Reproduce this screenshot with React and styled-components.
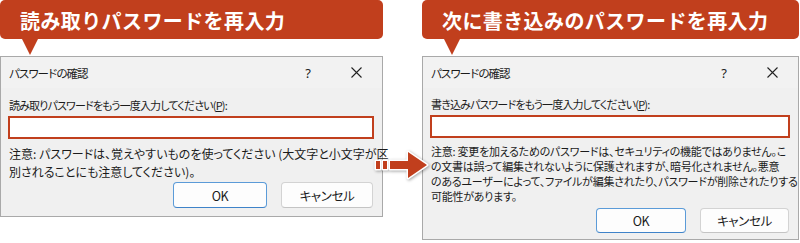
import React from 'react';
import styled, { createGlobalStyle } from 'styled-components';

const Global = createGlobalStyle`
  html, body { margin: 0; padding: 0; background: #fff; }
  body {
    width: 800px; height: 243px; overflow: hidden;
    font-family: "Noto Sans CJK JP", "Noto Sans", sans-serif;
  }
`;

const RED = '#c13f1d';

const Page = styled.div`
  position: relative;
  display: flex;
  align-items: flex-start;
  gap: 39px;
  width: 800px;
  height: 243px;
`;

const Column = styled.div`
  display: flex;
  flex-direction: column;
  flex: none;
  width: ${(p) => p.$w}px;
`;

const Banner = styled.div`
  height: 39px;
  box-sizing: border-box;
  background: ${RED};
  border-radius: 5px;
  color: #fff;
  font-weight: 700;
  font-size: 20px;
  letter-spacing: 0.4px;
  display: flex;
  align-items: center;
  padding: 2px 0 0 20px;
  white-space: nowrap;
`;

const Pointer = styled.div`
  width: 0;
  height: 0;
  margin-left: ${(p) => p.$x - 8}px;
  border-left: 8px solid transparent;
  border-right: 8px solid transparent;
  border-top: 16px solid ${RED};
  margin-bottom: 1px;
`;

const Dialog = styled.div`
  border: 1px solid #a9a9a9;
  background: #f0f0f0;
  color: #1b1b1b;
  font-size: 12px;
  padding-bottom: ${(p) => p.$padB}px;
`;

const TitleBar = styled.div`
  height: 31px;
  display: flex;
  align-items: center;
  padding-left: 8px;
  background: #f2f2f2;
`;

const Title = styled.div`
  flex: 1;
  font-size: 11.5px;
  letter-spacing: -0.9px;
  font-feature-settings: "palt";
  color: #1b1b1b;
`;

const TitleButton = styled.div`
  width: 48px;
  height: 31px;
  display: flex;
  align-items: center;
  justify-content: center;
  font-size: 13px;
  color: #222;
  font-family: "Noto Sans", sans-serif;
  &:last-child { margin-right: 2px; }
`;

const Body = styled.div`
  padding: ${(p) => p.$padT}px 8px 0 7px;
  display: flex;
  flex-direction: column;
`;

const Label = styled.div`
  line-height: 16px;
  padding-left: 1px;
  font-size: 11px;
  letter-spacing: -0.85px;
  white-space: nowrap;
  font-feature-settings: "palt";
`;

const Input = styled.div`
  margin-top: 3px;
  height: 23px;
  box-sizing: border-box;
  border: 2px solid ${RED};
  background: #fff;
`;

const Note = styled.div`
  margin-top: 6px;
  padding-left: 1px;
  font-size: ${(p) => p.$fs}px;
  letter-spacing: ${(p) => p.$ls}px;
  line-height: ${(p) => p.$lh}px;
  font-feature-settings: "palt";
`;

const Line = styled.div`
  white-space: nowrap;
`;

const Buttons = styled.div`
  margin-top: ${(p) => p.$mt}px;
  display: flex;
  justify-content: flex-end;
  gap: 14px;
  padding-right: 1px;
`;

const Button = styled.div`
  width: ${(p) => p.$w}px;
  height: ${(p) => p.$h}px;
  box-sizing: border-box;
  border-radius: 4px;
  border: 1px solid ${(p) => (p.$primary ? '#5b9bd8' : '#d3d3d3')};
  border-bottom-color: ${(p) => (p.$primary ? '#3f83c9' : '#c4c4c4')};
  background: #fdfdfd;
  display: flex;
  align-items: center;
  justify-content: center;
  font-size: 12.5px;
  letter-spacing: -0.4px;
  font-feature-settings: "palt";
  color: #1b1b1b;
`;

const ArrowSvg = styled.svg`
  position: absolute;
  left: 369px;
  top: 145px;
  filter: drop-shadow(1px 1.5px 1.5px rgba(0, 0, 0, 0.35));
`;

const CloseIcon = () => (
  <svg width="11" height="11" viewBox="0 0 11 11">
    <path d="M0.5 0.5 L10.5 10.5 M10.5 0.5 L0.5 10.5" stroke="#222" strokeWidth="1.1" fill="none" />
  </svg>
);

const PasswordDialog = ({ label, lines, fs, ls, lh, padT, btnMt, padB, okW, cancelW, btnH }) => (
  <Dialog $padB={padB}>
    <TitleBar>
      <Title>パスワードの確認</Title>
      <TitleButton>?</TitleButton>
      <TitleButton><CloseIcon /></TitleButton>
    </TitleBar>
    <Body $padT={padT}>
      <Label>{label}(<u>P</u>):</Label>
      <Input />
      <Note $fs={fs} $ls={ls} $lh={lh}>
        {lines.map((l) => (
          <Line key={l}>{l}</Line>
        ))}
      </Note>
      <Buttons $mt={btnMt}>
        <Button $primary $w={okW} $h={btnH}>OK</Button>
        <Button $w={cancelW} $h={btnH}>キャンセル</Button>
      </Buttons>
    </Body>
  </Dialog>
);

const Arrow = () => (
  <ArrowSvg width="64" height="40" viewBox="0 0 64 40">
    <g stroke="#fff" strokeWidth="3" strokeLinejoin="round" paintOrder="stroke" fill={RED}>
      <rect x="7" y="16" width="4" height="8" />
      <rect x="14" y="16" width="4" height="8" />
      <path d="M21 16 H39 V7 L58 20 L39 33 V24 H21 Z" />
    </g>
  </ArrowSvg>
);

export default function App() {
  return (
    <>
      <Global />
      <Page>
        <Column $w={383}>
          <Banner>読み取りパスワードを再入力</Banner>
          <Pointer $x={30} />
          <PasswordDialog
            label="読み取りパスワードをもう一度入力してください"
            lines={[
              '注意: パスワードは、覚えやすいものを使ってください (大文字と小文字が区',
              '別されることにも注意してください)。',
            ]}
            fs={12}
            ls={0}
            lh={18}
            padT={9}
            btnMt={1}
            padB={8}
            okW={94}
            cancelW={92}
            btnH={26}
          />
        </Column>
        <Column $w={377}>
          <Banner>次に書き込みのパスワードを再入力</Banner>
          <Pointer $x={30} />
          <PasswordDialog
            label="書き込みパスワードをもう一度入力してください"
            lines={[
              '注意: 変更を加えるためのパスワードは、セキュリティの機能ではありません。こ',
              'の文書は誤って編集されないように保護されますが、暗号化されません。悪意',
              'のあるユーザーによって、ファイルが編集されたり、パスワードが削除されたりする',
              '可能性があります。',
            ]}
            fs={11}
            ls={-0.25}
            lh={15}
            padT={8}
            btnMt={4}
            padB={6}
            okW={90}
            cancelW={89}
            btnH={25}
          />
        </Column>
        <Arrow />
      </Page>
    </>
  );
}
